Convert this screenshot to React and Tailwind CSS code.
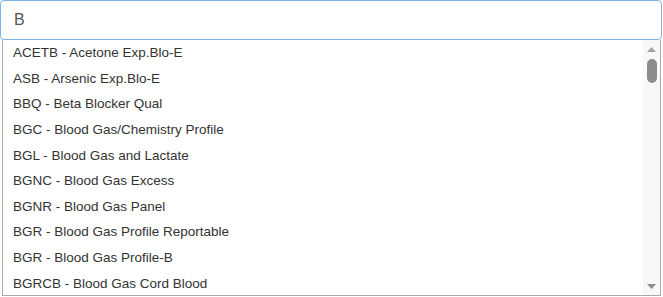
import { useState } from 'react'

const items = [
  'ACETB - Acetone Exp.Blo-E',
  'ASB - Arsenic Exp.Blo-E',
  'BBQ - Beta Blocker Qual',
  'BGC - Blood Gas/Chemistry Profile',
  'BGL - Blood Gas and Lactate',
  'BGNC - Blood Gas Excess',
  'BGNR - Blood Gas Panel',
  'BGR - Blood Gas Profile Reportable',
  'BGR - Blood Gas Profile-B',
  'BGRCB - Blood Gas Cord Blood',
]

function Scrollbar() {
  return (
    <div className="flex w-[17px] shrink-0 flex-col items-center bg-[#f8f8f8]">
      <svg width="17" height="17" viewBox="0 0 17 17">
        <path d="M4 12 L8.5 7 L13 12 Z" fill="#a3a3a3" />
      </svg>
      <div className="mt-[2px] h-[24px] w-[10px] rounded-full bg-[#8c8c8c]" />
      <div className="flex-1" />
      <svg width="17" height="17" viewBox="0 0 17 17">
        <path d="M4 6 L8.5 11 L13 6 Z" fill="#8c8c8c" />
      </svg>
    </div>
  )
}

export default function App() {
  const [query, setQuery] = useState('B')

  return (
    <div className="h-[297px] w-[663px] bg-white font-['Liberation_Sans',Arial,sans-serif]">
      <input
        value={query}
        onChange={(e) => setQuery(e.target.value)}
        className="block h-[40px] w-[662px] rounded-[4px] border border-[#7cb4e8] px-[13px] text-[16px] text-[#555] outline-none"
      />
      <div className="ml-[2px] flex h-[256px] w-[659px] border border-t-0 border-[#aaaaaa]">
        <ul className="flex-1 overflow-hidden">
          {items.map((item, i) => (
            <li
              key={i}
              className="h-[25.65px] pl-[10px] text-[13.5px] leading-[25px] text-[#333]"
            >
              {item}
            </li>
          ))}
        </ul>
        <Scrollbar />
      </div>
    </div>
  )
}
